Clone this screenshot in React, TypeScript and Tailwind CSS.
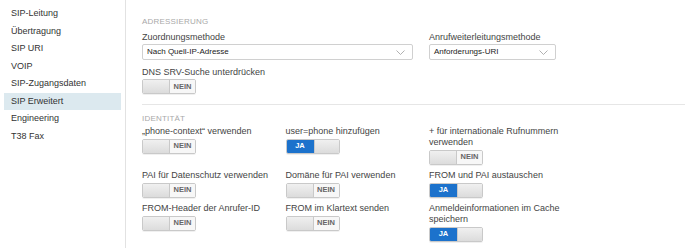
import { useState } from 'react'

const NAV = [
  'SIP-Leitung',
  'Übertragung',
  'SIP URI',
  'VOIP',
  'SIP-Zugangsdaten',
  'SIP Erweitert',
  'Engineering',
  'T38 Fax',
]

function Toggle({ on }: { on: boolean }) {
  return (
    <div className="flex h-[15px] w-[54px] overflow-hidden rounded-[2px] border border-[#c9c9c9] shadow-[0_1px_0_rgba(0,0,0,0.06)]">
      {on ? (
        <>
          <div className="flex w-[27px] items-center justify-center bg-[#1c72cc] text-[7.5px] font-bold text-white">JA</div>
          <div className="flex-1 border-l border-[#c9c9c9] bg-gradient-to-b from-[#f0f0f0] to-[#dcdcdc]" />
        </>
      ) : (
        <>
          <div className="w-[26px] bg-gradient-to-b from-[#f0f0f0] to-[#dcdcdc]" />
          <div className="flex flex-1 items-center justify-center border-l border-[#c9c9c9] bg-[#f7f7f7] text-[7.5px] font-semibold text-[#666]">
            NEIN
          </div>
        </>
      )}
    </div>
  )
}

function Select({ value, width }: { value: string; width: string }) {
  return (
    <div className={`flex h-[16px] items-center justify-between rounded-[2px] border border-[#d0d0d0] bg-white pl-[4px] pr-[7px] ${width}`}>
      <span className="text-[8px] text-[#222]">{value}</span>
      <svg width="9" height="5" viewBox="0 0 9 5" fill="none">
        <path d="M0.5 0.5 L4.5 4.5 L8.5 0.5" stroke="#a8a8a8" strokeWidth="0.9" />
      </svg>
    </div>
  )
}

function Field({ label, on }: { label: React.ReactNode; on: boolean }) {
  return (
    <div className="flex flex-col">
      <div className="text-[9px] leading-[11px] text-[#444]">{label}</div>
      <div className="mt-[2px]">
        <Toggle on={on} />
      </div>
    </div>
  )
}

function SectionHead({ title }: { title: string }) {
  return <div className="text-[8px] leading-[10px] tracking-[0.2px] text-[#a9a9a9]">{title}</div>
}

export default function App() {
  const [active, setActive] = useState('SIP Erweitert')

  return (
    <div className="flex h-[248px] w-[700px] bg-white font-['Liberation_Sans',Arial,sans-serif] text-[#333]">
      <aside className="w-[126px] shrink-0 border-r border-[#e2e2e2] px-[4px] pt-[5px]">
        {NAV.map((item) => (
          <div
            key={item}
            onClick={() => setActive(item)}
            className={`flex h-[17.5px] cursor-pointer items-center pl-[7px] text-[9px] text-[#333] ${
              item === active ? 'bg-[#dce9ef]' : ''
            }`}
          >
            {item}
          </div>
        ))}
      </aside>

      <main className="flex-1 pl-[16px] pr-[15px] pt-[17px]">
        <SectionHead title="ADRESSIERUNG" />
        <div className="mt-[4px] grid grid-cols-[287px_1fr]">
          <div>
            <div className="text-[9px] leading-[12px] text-[#444]">Zuordnungsmethode</div>
            <div className="mt-[1px]">
              <Select value="Nach Quell-IP-Adresse" width="w-[271px]" />
            </div>
          </div>
          <div>
            <div className="text-[9px] leading-[12px] text-[#444]">Anrufweiterleitungsmethode</div>
            <div className="mt-[1px]">
              <Select value="Anforderungs-URI" width="w-[127px]" />
            </div>
          </div>
        </div>
        <div className="mt-[6px]">
          <div className="text-[9px] leading-[12px] text-[#444]">DNS SRV-Suche unterdrücken</div>
          <div className="mt-[1px]">
            <Toggle on={false} />
          </div>
        </div>

        <div className="mt-[10px] border-t border-[#e6e6e6]" />

        <div className="mt-[9px]">
          <SectionHead title="IDENTITÄT" />
        </div>
        <div className="mt-[1.5px] grid grid-cols-[143.5px_143.5px_1fr] gap-y-[5px]">
          <Field label="„phone-context“ verwenden" on={false} />
          <Field label="user=phone hinzufügen" on={true} />
          <Field
            label={
              <>
                + für internationale Rufnummern
                <br />
                verwenden
              </>
            }
            on={false}
          />
          <Field label="PAI für Datenschutz verwenden" on={false} />
          <Field label="Domäne für PAI verwenden" on={false} />
          <Field label="FROM und PAI austauschen" on={true} />
          <Field label="FROM-Header der Anrufer-ID" on={false} />
          <Field label="FROM im Klartext senden" on={false} />
          <Field
            label={
              <>
                Anmeldeinformationen im Cache
                <br />
                speichern
              </>
            }
            on={true}
          />
        </div>
      </main>
    </div>
  )
}
